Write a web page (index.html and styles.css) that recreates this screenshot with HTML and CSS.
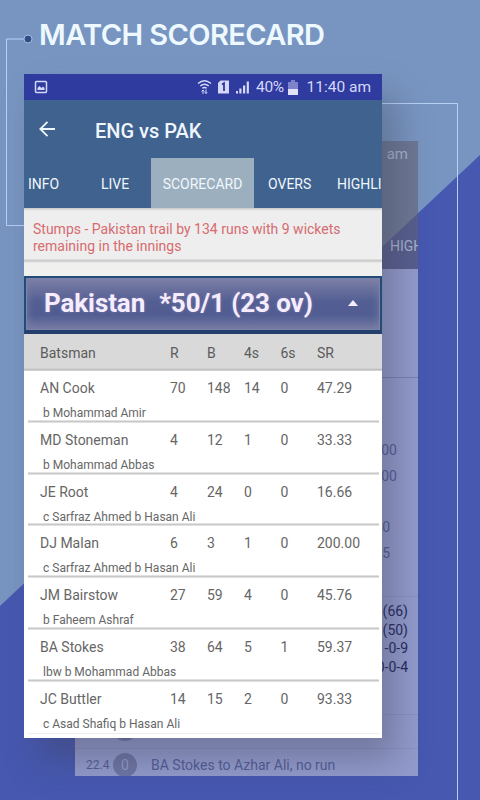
FILE: index.html
```html
<!DOCTYPE html>
<html lang="en">
<head>
  <meta charset="utf-8">
  <title>Match Scorecard</title>
  <link rel="stylesheet" href="styles.css">
</head>
<body>
<div class="promo">
  <svg class="backdrop" width="480" height="800" viewBox="0 0 480 800" aria-hidden="true">
    <path d="M0 606 480 155V800H0z" fill="#4658b0"/>
    <path d="M27 39H6.500V225.500H30M370 103.500H457.500V800" fill="none" stroke="#b9d0f5"/>
    <circle cx="28" cy="39" r="4" fill="#2f4e83" stroke="#a3bce5"/>
  </svg>

  <h1 class="headline">MATCH SCORECARD</h1>

  <div class="back-screen">
    <div class="back-status">am</div>
    <div class="back-tabs">HIGHLIGHTS</div>
    <div class="back-summary"></div>
    <div class="back-overs">
      <span>00</span>
      <span>00</span>
      <span class="far">0</span>
      <span class="near">5</span>
    </div>
    <div class="back-players">
      <span>8(66)</span>
      <span>(50)</span>
      <span>1-0-9</span>
      <span>0-0-4</span>
    </div>
    <div class="back-ball first"><span></span><b></b></div>
    <div class="back-ball last"><span>22.4</span><b>0</b><p>BA Stokes to Azhar Ali, no run</p></div>
  </div>

  <div class="phone">
    <div class="status-bar">
      <svg width="14" height="14" viewBox="0 0 14 14" fill="none" stroke="#d5d8f8" stroke-width="1.500">
        <rect x="1.500" y="1.500" width="11" height="11" rx="1"/>
        <path d="M3.500 10V8l2-2 2 2 1.500-1.500L10.500 8v2z" fill="#d5d8f8" stroke="none"/>
      </svg>
      <svg class="signals" width="56" height="16" viewBox="0 0 56 16" fill="none" stroke="#d5d8f8" stroke-width="1.400">
        <path d="M1 4.500Q7.500-1 14 4.500M3.200 7Q7.500 3.500 11.800 7M5.300 9.300Q7.500 7.600 9.700 9.300"/>
        <path d="M6 15v-4M4.600 12.500 6 11l1.400 1.500M9 10.500v4M7.800 13.200 9 14.500l1.200-1.300" stroke-width="1"/>
        <path d="M23.500 1.500H32V14.500H21V4z" fill="#d5d8f8" stroke="none"/>
        <path d="M25 5.500 27 4.200V12" stroke="#2f3a9f" stroke-width="1.800"/>
        <path d="M39 14.500V12h2v2.500zM42.300 14.500V9.500h2.200v5zM46 14.500v-8h2.200v8zM49.700 14.500V2.500h2.200v12z" fill="#d5d8f8" stroke="none"/>
      </svg>
      <span class="charge">40%</span>
      <svg class="battery" width="10" height="15" viewBox="0 0 10 15">
        <path d="M3 0h4v2h3v7H0V2h3z" fill="#7f83cc"/>
        <path d="M0 9h10v6H0z" fill="#e0e2fa"/>
      </svg>
      <span class="clock">11:40 am</span>
    </div>
    <div class="toolbar">
      <svg width="18" height="18" viewBox="0 0 18 18" fill="none" stroke="#eef6fc" stroke-width="1.800">
        <path d="M17 9H2.500M9.500 1.800 2.300 9l7.200 7.200"/>
      </svg>
      <h2>ENG vs PAK</h2>
    </div>
    <nav class="tabs">
      <span class="info">INFO</span>
      <span class="live">LIVE</span>
      <span class="active">SCORECARD</span>
      <span class="overs">OVERS</span>
      <span class="highlights">HIGHLIGHTS</span>
    </nav>
    <p class="message">Stumps - Pakistan trail by 134 runs with 9 wickets<br>remaining in the innings</p>
    <div class="innings">
      <span class="team">Pakistan</span>
      <span class="score">*50/1 (23 ov)</span>
      <i class="caret"></i>
    </div>
    <div class="row table-head"><span>Batsman</span><span>R</span><span>B</span><span>4s</span><span>6s</span><span>SR</span></div>
    <div class="batsman">
      <div class="row"><span>AN Cook</span><span>70</span><span>148</span><span>14</span><span>0</span><span>47.29</span></div>
      <p>b Mohammad Amir</p>
    </div>
    <div class="batsman">
      <div class="row"><span>MD Stoneman</span><span>4</span><span>12</span><span>1</span><span>0</span><span>33.33</span></div>
      <p>b Mohammad Abbas</p>
    </div>
    <div class="batsman">
      <div class="row"><span>JE Root</span><span>4</span><span>24</span><span>0</span><span>0</span><span>16.66</span></div>
      <p>c Sarfraz Ahmed b Hasan Ali</p>
    </div>
    <div class="batsman">
      <div class="row"><span>DJ Malan</span><span>6</span><span>3</span><span>1</span><span>0</span><span>200.00</span></div>
      <p>c Sarfraz Ahmed b Hasan Ali</p>
    </div>
    <div class="batsman">
      <div class="row"><span>JM Bairstow</span><span>27</span><span>59</span><span>4</span><span>0</span><span>45.76</span></div>
      <p>b Faheem Ashraf</p>
    </div>
    <div class="batsman">
      <div class="row"><span>BA Stokes</span><span>38</span><span>64</span><span>5</span><span>1</span><span>59.37</span></div>
      <p>lbw b Mohammad Abbas</p>
    </div>
    <div class="batsman last">
      <div class="row"><span>JC Buttler</span><span>14</span><span>15</span><span>2</span><span>0</span><span>93.33</span></div>
      <p>c Asad Shafiq b Hasan Ali</p>
    </div>
  </div>
</div>
</body>
</html>
```
FILE: styles.css
```css
* {
    box-sizing: border-box;
}

body, h1, h2, p {
    margin: 0;
}

body {
    font-family: Roboto, "Liberation Sans", sans-serif;
    font-size: 14px;
    color: #666;
}

.promo {
    position: relative;
    width: 480px;
    height: 800px;
    overflow: hidden;
    background: #7895c1;
}

.backdrop {
    position: absolute;
    top: 0;
    left: 0;
}

.headline {
    position: relative;
    height: 74px;
    padding: 17px 0 0 39px;
    font-family: Inter, Roboto, sans-serif;
    font-size: 29px;
    font-weight: 600;
    letter-spacing: -.6px;
    line-height: 36px;
    white-space: nowrap;
    color: #eef9ff;
}

/* second screen, half hidden behind the phone */
.back-screen {
    position: absolute;
    top: 141px;
    left: 75px;
    width: 343px;
    height: 635px;
    overflow: hidden;
    color: #535b96;
}

.back-status, .back-tabs {
    background: rgba(100, 98, 115, .58);
    color: #a8b3cd;
}

.back-status {
    height: 26px;
    padding-right: 10px;
    font-size: 15px;
    line-height: 26px;
    text-align: right;
}

.back-tabs {
    height: 102px;
    padding: 70px 0 0 315px;
    line-height: 18px;
}

.back-summary, .back-overs, .back-players, .back-ball {
    background: #929bcc;
    border-bottom: 1px solid #8890c3;
}

.back-summary {
    height: 109px;
    border-bottom-color: #7780b5;
}

.back-overs {
    display: flex;
    flex-direction: column;
    height: 219px;
    padding: 59px 21px 0 0;
    text-align: right;
    line-height: 26px;
}

.back-overs .far {
    margin-top: 25px;
}

.back-overs .far, .back-overs .near {
    padding-right: 7px;
}

.back-players {
    display: flex;
    flex-direction: column;
    height: 118px;
    padding: 5px 10px 0 0;
    color: #22285f;
    line-height: 18.7px;
    text-align: right;
}

.back-ball {
    display: flex;
    align-items: center;
    height: 34px;
    padding-left: 11px;
}

.back-ball.first {
    align-items: flex-start;
    padding-top: 2px;
}

.back-ball.last {
    height: 32px;
    border-bottom: 0;
}

.back-ball span {
    width: 27px;
    font-size: 12px;
}

.back-ball b {
    width: 24px;
    height: 24px;
    border-radius: 50%;
    background: #6d75a5;
    color: #969ec6;
    font-weight: 400;
    line-height: 24px;
    text-align: center;
}

.back-ball p {
    margin-left: 14px;
}

.phone {
    position: relative;
    width: 358px;
    height: 664px;
    margin-left: 24px;
    background: #fff;
    box-shadow: 14px 22px 32px rgba(60, 62, 80, .36);
}

.status-bar {
    display: flex;
    align-items: center;
    height: 26px;
    padding: 0 11px 0 10px;
    background: #2f3b9f;
    color: #d5d8f8;
    font-size: 15.5px;
}

.signals {
    margin-left: 149px;
}

.charge {
    margin-left: 3px;
    letter-spacing: -.3px;
}

.battery {
    margin-left: 4px;
}

.clock {
    margin-left: auto;
}

.toolbar {
    display: flex;
    align-items: center;
    height: 58px;
    padding-left: 14px;
    background: #3f628e;
    color: #eef6fc;
}

.toolbar h2 {
    margin: 3px 0 0 39px;
    font-size: 20px;
    font-weight: 500;
}

.tabs {
    display: flex;
    height: 50px;
    overflow: hidden;
    background: #3f628e;
    color: #f0f7fc;
    line-height: 52px;
    white-space: nowrap;
}

.tabs span {
    flex: none;
}

.tabs .info {
    width: 77px;
    padding-left: 4px;
}

.tabs .live {
    width: 50px;
}

.tabs .active {
    width: 103px;
    background: #9cafbf;
    text-align: center;
}

.tabs .overs {
    width: 83px;
    padding-left: 14px;
}

.message {
    height: 68px;
    padding: 13px 9px 0;
    background: linear-gradient(#c8c8c8, #eee 3px, #eee 51px, #ccc 52px, #ccc 53px, #f0f0ef 55px);
    color: #d76b6f;
    line-height: 17px;
}

.innings {
    display: flex;
    align-items: center;
    height: 58px;
    padding: 0 22px 2px 18px;
    border: 2px solid #234b78;
    border-bottom: 4px solid #253f6c;
    background: linear-gradient(#7d7fa6, #535f93 45%, #515d92 70%, #7479a2);
    box-shadow: inset 0 0 10px #7f80a6, inset 0 0 0 1px #7489ad;
    color: #f5edff;
    font-size: 26px;
    font-weight: 700;
    letter-spacing: -.1px;
    text-shadow: 0 0 3px #8079a5;
    white-space: nowrap;
}

.score {
    margin-left: 14px;
}

.caret {
    margin-left: auto;
    border: 5px solid transparent;
    border-top: 0;
    border-bottom: 6px solid #f5edff;
}

.row {
    display: grid;
    grid-template-columns: 130px 37px 37px 36.5px 36.5px 1fr;
    padding-left: 16px;
}

.table-head {
    height: 37px;
    background: linear-gradient(#d9d9d9 34px, #b8b8b8 36px, #e8e8e8);
    color: #5b5b5b;
    line-height: 39px;
}

.batsman {
    height: 51.8px;
    padding-top: 8px;
    background: linear-gradient(#eee, #c8c8c8 50%, #eee) center bottom / 351px 3px no-repeat;
    line-height: 18px;
}

.batsman p {
    padding: 7px 0 0 19px;
    font-size: 12px;
}

.batsman.last {
    background: linear-gradient(#eee, #eee) center bottom / 351px 1px no-repeat;
}
```
